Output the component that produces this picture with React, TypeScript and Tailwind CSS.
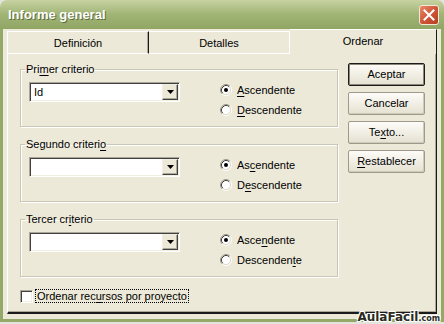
import type { ReactNode } from "react";

const sunken =
  "border border-t-[#aca899] border-l-[#aca899] border-r-white border-b-white shadow-[inset_1px_1px_0_#404040,inset_-1px_-1px_0_#f1efe2]";

function U({ children }: { children: ReactNode }) {
  return <span className="underline underline-offset-[2px]">{children}</span>;
}

function Radio({ checked, children }: { checked?: boolean; children: ReactNode }) {
  return (
    <div className="flex h-[20px] items-center gap-[5px]">
      <svg width="12" height="12" viewBox="0 0 12 12" className="shrink-0">
        <circle cx="6" cy="6" r="4.5" fill="#fff" />
        <path d="M2.11 9.89 A5.5 5.5 0 0 1 9.89 2.11" stroke="#9a9889" fill="none" />
        <path d="M2.82 9.18 A4.5 4.5 0 0 1 9.18 2.82" stroke="#404040" fill="none" />
        <path d="M9.89 2.11 A5.5 5.5 0 0 1 2.11 9.89" stroke="#fff" fill="none" />
        <path d="M9.18 2.82 A4.5 4.5 0 0 1 2.82 9.18" stroke="#dcd8c8" fill="none" />
        {checked && <circle cx="6" cy="6" r="2" fill="#000" />}
      </svg>
      <span>{children}</span>
    </div>
  );
}

function Combo({ value }: { value?: string }) {
  return (
    <div className={`mt-[6px] flex h-[20px] w-[151px] bg-white p-[1px] ${sunken}`}>
      <span className="flex-1 pl-[3px] leading-[16px]">{value}</span>
      <div className="flex w-[16px] items-center justify-center border border-t-[#f1efe2] border-l-[#f1efe2] border-r-[#404040] border-b-[#404040] bg-[#ece9d8] shadow-[inset_-1px_-1px_0_#aca899]">
        <svg width="7" height="4" viewBox="0 0 7 4">
          <path d="M0 0h7L3.5 4z" fill="#000" />
        </svg>
      </div>
    </div>
  );
}

function Group({
  title,
  value,
  asc,
  desc,
}: {
  title: ReactNode;
  value?: string;
  asc: ReactNode;
  desc: ReactNode;
}) {
  return (
    <fieldset className="h-[64px] border border-[#c9c6b6] px-[8px] pt-0 shadow-[inset_1px_1px_0_#fff,1px_1px_0_#fff]">
      <legend className="ml-[-4px] px-[1px] leading-[13px]">{title}</legend>
      <div className="flex">
        <Combo value={value} />
        <div className="ml-[40px] mt-[4px] flex flex-col">
          <Radio checked>{asc}</Radio>
          <Radio>{desc}</Radio>
        </div>
      </div>
    </fieldset>
  );
}

function Btn({ children, def }: { children: ReactNode; def?: boolean }) {
  return (
    <button
      className={`flex h-[23px] w-[77px] items-center justify-center rounded-[2px] border bg-gradient-to-b from-[#fdfcf8] to-[#e5e1d1] ${
        def
          ? "border-[#1c1c1c] shadow-[inset_0_0_0_1px_#8a877a]"
          : "border-[#9d9a8b] shadow-[inset_-1px_-1px_0_#cfcbba]"
      }`}
    >
      {children}
    </button>
  );
}

export default function App() {
  return (
    <div className="relative flex h-[324px] w-[444px] flex-col overflow-hidden bg-[#e4e4dc] font-['Liberation_Sans',Arial,sans-serif] text-[11px] text-black">
      {/* title bar */}
      <div className="flex h-[29px] shrink-0 items-center justify-between rounded-t-[7px] bg-gradient-to-b from-[#c7d3a2] via-[#a0b474] to-[#90a665] pl-[8px] pr-[5px]">
        <span className="text-[13px] font-bold text-white [text-shadow:1px_1px_0_#5f6d3c]">
          Informe general
        </span>
        <div className="flex h-[20px] w-[20px] items-center justify-center rounded-[3px] border border-[#f4e8d8] bg-gradient-to-br from-[#e98a6a] via-[#d0563a] to-[#b63e22]">
          <svg width="12" height="12" viewBox="0 0 12 12">
            <path d="M1.5 1.5l9 9M10.5 1.5l-9 9" stroke="#fff" strokeWidth="2" strokeLinecap="square" />
          </svg>
        </div>
      </div>

      {/* body */}
      <div className="flex h-[293px] shrink-0 flex-col border-x-[3px] border-b-[3px] border-[#94a86a] bg-[#ece9d8] px-[4px]">
        {/* tabs */}
        <div className="flex h-[25px] items-end">
          <div className="flex h-[23px] w-[142px] items-center justify-center border-l border-t border-r border-b border-l-white border-t-white border-r-[#1a1a1a] border-b-white pt-[1px] shadow-[inset_-1px_0_0_#aca899]">
            Definición
          </div>
          <div className="flex h-[23px] w-[141px] items-center justify-center border-t border-r border-b border-t-white border-r-white border-b-white pt-[1px]">
            Detalles
          </div>
          <div className="flex h-[25px] flex-1 items-center justify-center border-r border-t border-r-[#1a1a1a] border-t-white pb-[1px]">
            Ordenar
          </div>
        </div>

        {/* panel */}
        <div className="flex h-[260px] border-l border-r border-b-2 border-l-white border-r-[#1a1a1a] border-b-[#1a1a1a] pl-[12px] shadow-[inset_-1px_-1px_0_#aca899]">
          <div className="flex w-[318px] flex-col pt-[9px]">
            <div className="flex flex-col gap-[11px]">
              <Group
                title={<>Pri<U>m</U>er criterio</>}
                value="Id"
                asc={<><U>A</U>scendente</>}
                desc={<><U>D</U>escendente</>}
              />
              <Group
                title={<>Segundo criteri<U>o</U></>}
                asc={<>As<U>c</U>endente</>}
                desc={<>D<U>e</U>scendente</>}
              />
              <Group
                title={<>Tercer cr<U>i</U>terio</>}
                asc={<>Asce<U>n</U>dente</>}
                desc={<>Descenden<U>t</U>e</>}
              />
            </div>
            <div className="mt-[12px] flex items-center gap-[2px]">
              <div className={`h-[13px] w-[13px] bg-white ${sunken}`} />
              <span className="border border-dotted border-black px-[1px] leading-[12px]">
                Ordenar rec<U>u</U>rsos por proyecto
              </span>
            </div>
          </div>

          <div className="ml-[10px] flex flex-col gap-[6px] pt-[9px]">
            <Btn def>Aceptar</Btn>
            <Btn>Cancelar</Btn>
            <Btn>Te<U>x</U>to...</Btn>
            <Btn><U>R</U>establecer</Btn>
          </div>
        </div>
      </div>

      {/* watermark */}
      <div className="absolute bottom-[-2px] right-[4px] font-['DejaVu_Sans',sans-serif] font-bold leading-[15px] text-[#2b2b22] [text-shadow:-1px_-1px_0_#fff,1px_-1px_0_#fff,-1px_1px_0_#fff,1px_1px_0_#fff]">
        <span className="text-[12px]">AulaFacil</span>
        <span className="text-[8px]">.com</span>
      </div>
    </div>
  );
}
